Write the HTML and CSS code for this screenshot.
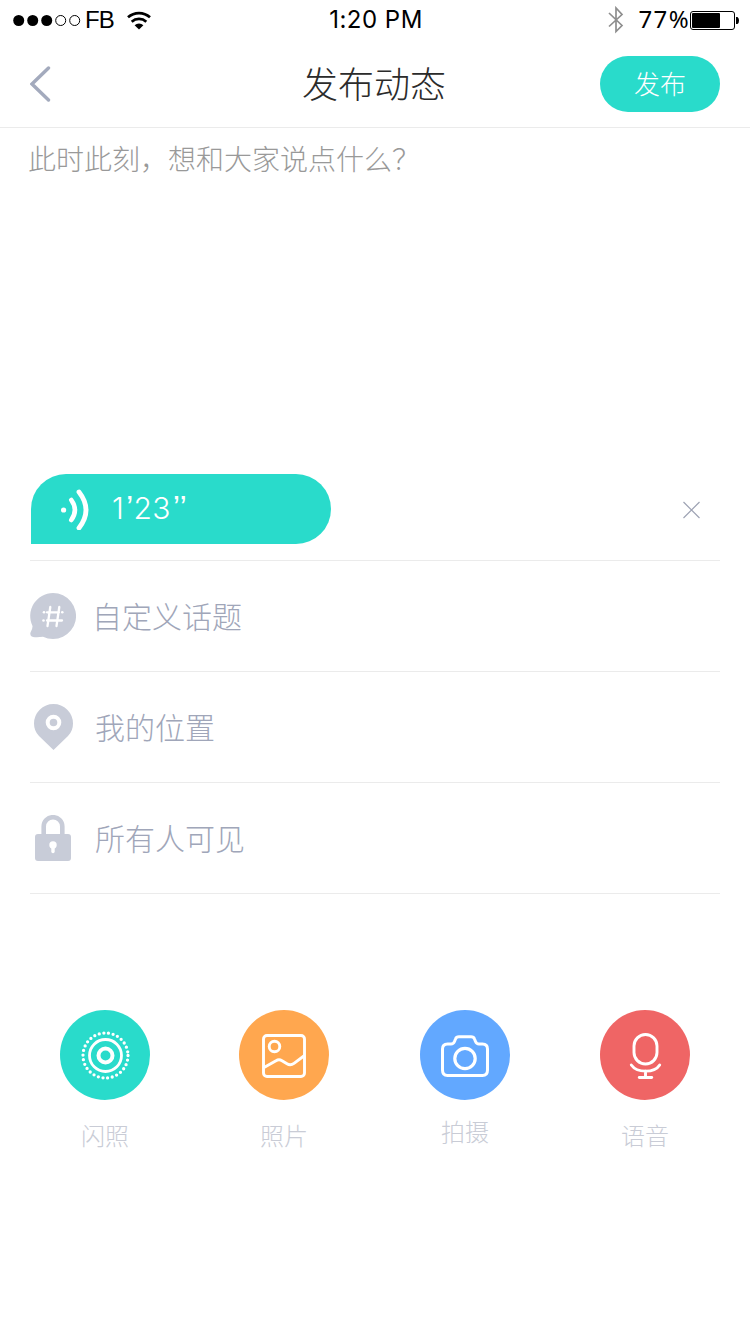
FILE: index.html
```html
<!DOCTYPE html>
<html lang="zh-CN">
<head>
  <meta charset="UTF-8" />
  <meta name="viewport" content="width=device-width, initial-scale=1.0"/>
  <title>发布动态</title>
  <link rel="stylesheet" href="styles.css">
</head>

<body>
  <!-- Phone status bar -->
  <div class="status-bar">
    <div class="status-left">
      <svg class="signal" width="68" height="12" viewBox="0 0 68 12">
        <circle cx="5.7" cy="6.5" r="5.5"/>
        <circle cx="19.7" cy="6.5" r="5.5"/>
        <circle cx="33.7" cy="6.5" r="5.5"/>
        <circle cx="47.7" cy="6.5" r="5" fill="none" stroke="#000"/>
        <circle cx="61.7" cy="6.5" r="5" fill="none" stroke="#000"/>
      </svg>
      <span class="carrier">FB</span>
      <svg class="wifi" width="24" height="19" viewBox="0 0 24 19">
        <path d="M1 6.3a16.5 16.5 0 0 1 22 0M4.7 10.7a11 11 0 0 1 14.6 0" fill="none" stroke="#000" stroke-width="2.7"/>
        <path d="M12 18.6L7.6 14.2a6.4 6.4 0 0 1 8.8 0z"/>
      </svg>
    </div>
    <span class="time">1:20 PM</span>
    <div class="status-right">
      <svg class="bluetooth" width="16" height="28" viewBox="0 0 16 28">
        <path d="M1 7L14 19.5L8 25.5V2L14 8.5L1 20.5" fill="none" stroke="#8e8e8e" stroke-width="1.7"/>
      </svg>
      <span class="percent">77%</span>
      <svg class="battery" width="49" height="19" viewBox="0 0 49 19">
        <rect x="0.5" y="0.5" width="44" height="18" rx="2.5" fill="none" stroke="#000"/>
        <rect x="2" y="2" width="28" height="15" rx="1"/>
        <path d="M46 6h1.5q1.5 1 1.5 3.5t-1.5 3.5H46z"/>
      </svg>
    </div>
  </div>

  <header class="nav">
    <a class="back" href="#">
      <svg width="22" height="36" viewBox="0 0 22 36">
        <path d="M18.5 2L2 18L18.5 34" fill="none" stroke="#a3aabd" stroke-width="3.4" stroke-linecap="round"/>
      </svg>
    </a>
    <h1 class="title">发布动态</h1>
    <button class="publish">发布</button>
  </header>

  <section class="editor">
    <p class="placeholder">此时此刻，想和大家说点什么？</p>
  </section>

  <section class="options">
    <!-- Recorded voice clip -->
    <div class="voice-row">
      <div class="voice">
        <svg width="30" height="42" viewBox="0 0 30 42" fill="none" stroke="#fff" stroke-linecap="round">
          <circle cx="2.6" cy="22" r="2.6" fill="#fff" stroke="none"/>
          <path d="M10.3 12Q17.5 22 10.3 32" stroke-width="4.6"/>
          <path d="M18 4Q32 22 18 40" stroke-width="4.8"/>
        </svg>
        <span class="duration">1<span class="mark">’</span>23<span class="mark">’’</span></span>
      </div>
      <svg class="remove" width="18" height="18" viewBox="0 0 18 18">
        <path d="M0.5 1L16.5 17M16.5 1L0.5 17" stroke="#9ea3b4" stroke-width="1.2"/>
      </svg>
    </div>

    <div class="option option-topic">
      <svg width="46" height="46" viewBox="0 0 46 46">
        <path d="M23 0A23 23 0 1 1 13 43.7Q8 44.5 3 44Q-.5 43 .5 39.5Q2.7 36 2.5 33A23 23 0 0 1 23 0z" fill="#c8ccd8"/>
        <path d="M20.3 14L17.5 33M29.3 14L26.5 33M17 19.3H29M17 27.5H32" fill="none" stroke="#fff" stroke-width="2.3" stroke-linecap="round"/>
        <g fill="#fff">
          <circle cx="14" cy="19.3" r="1.3"/>
          <circle cx="32.3" cy="19.3" r="1.3"/>
          <circle cx="13.5" cy="27.5" r="1.3"/>
        </g>
      </svg>
      <span>自定义话题</span>
    </div>

    <div class="option">
      <svg width="46" height="46" viewBox="0 0 46 46">
        <path d="M23.5 46L9 32Q4 27 4 19.5A19.5 19.5 0 0 1 43 19.5Q43 27 38 32z" fill="#c8ccd8"/>
        <circle cx="23.5" cy="18.5" r="5.8" fill="none" stroke="#fff" stroke-width="4"/>
      </svg>
      <span>我的位置</span>
    </div>

    <div class="option">
      <svg width="46" height="46" viewBox="0 0 46 46">
        <path d="M13.7 21V11.5a9.3 9.3 0 0 1 18.6 0V21" fill="none" stroke="#c8ccd8" stroke-width="4.6"/>
        <rect x="5" y="19" width="36" height="27" rx="3" fill="#c8ccd8"/>
        <circle cx="23" cy="30" r="3.7" fill="#fff"/>
        <path d="M23 31V36.5" stroke="#fff" stroke-width="3.4" stroke-linecap="round"/>
      </svg>
      <span>所有人可见</span>
    </div>
  </section>

  <footer class="actions">
    <div class="action">
      <div class="circle flash">
        <svg width="50" height="50" viewBox="0 0 50 50" fill="none" stroke="#fff">
          <circle cx="25.5" cy="25.5" r="22.5" stroke-width="3.3" stroke-linecap="round" stroke-dasharray="0 4.712"/>
          <circle cx="25.5" cy="25.5" r="16" stroke-width="2.8"/>
          <circle cx="25.5" cy="25.5" r="7" stroke-width="4"/>
        </svg>
      </div>
      <span>闪照</span>
    </div>
    <div class="action action-photo">
      <div class="circle photo">
        <svg width="50" height="50" viewBox="0 0 50 50" fill="none" stroke="#fff" stroke-width="2.9">
          <rect x="4.5" y="5.5" width="41" height="41" rx="3.5"/>
          <circle cx="15.5" cy="16.5" r="5.3"/>
          <path d="M5 37.5L17 30.7Q20 28.8 23 30.7L28 33.8Q31.5 36 35 33.3L45.5 25.5"/>
        </svg>
      </div>
      <span>照片</span>
    </div>
    <div class="action action-camera">
      <div class="circle camera">
        <svg width="50" height="50" viewBox="0 0 50 50" fill="none" stroke="#fff" stroke-width="3" stroke-linejoin="round">
          <path d="M7.5 14H11Q13.5 14 14.5 11.5L15.5 9Q16.3 6.700 19 6.700H31Q33.7 6.700 34.5 9L35.5 11.5Q36.5 14 39 14H42.5Q47.5 14 47.5 19V40Q47.5 45.5 42.5 45.5H7.5Q2.5 45.5 2.5 40V19Q2.5 14 7.5 14z"/>
          <circle cx="25" cy="28.5" r="10.2" stroke-width="3.2"/>
        </svg>
      </div>
      <span>拍摄</span>
    </div>
    <div class="action">
      <div class="circle mic">
        <svg width="50" height="50" viewBox="0 0 50 50" fill="none" stroke="#fff" stroke-width="2.9" stroke-linecap="round">
          <rect x="14" y="4.5" width="23" height="29.5" rx="11.5"/>
          <path d="M11.3 35C17 43.2 34.5 43.2 39.7 35M25.5 41V47"/>
          <path d="M19.3 47.5H31.7"/>
        </svg>
      </div>
      <span>语音</span>
    </div>
  </footer>
</body>
</html>
```
FILE: styles.css
```css
* {
  margin: 0;
  padding: 0;
  box-sizing: border-box;
}
body {
  width: 750px;
  height: 1334px;
  font-family: "Noto Sans CJK SC", sans-serif;
  font-weight: 300;
  background: #fff;
  overflow: hidden;
}
svg {
  display: block;
  flex-shrink: 0;
}

/* Status bar */
.status-bar {
  display: grid;
  grid-template-columns: 1fr auto 1fr;
  align-items: center;
  height: 40px;
  padding: 0 11px 0 13px;
  font-family: Inter, sans-serif;
  font-weight: 400;
  font-size: 24px;
  line-height: 40px;
  color: #000;
}
.status-left,
.status-right {
  display: flex;
  align-items: center;
}
.status-right {
  justify-content: flex-end;
}
.carrier {
  margin-left: 4px;
  font-family: "Liberation Sans", Arial, sans-serif;
  letter-spacing: -1px;
}
.wifi {
  margin-left: 13px;
}
.time {
  letter-spacing: 0.5px;
}
.bluetooth {
  margin-right: 14px;
}
.percent {
  padding-bottom: 2px;
  font-family: "Noto Sans", sans-serif;
  line-height: 38px;
  letter-spacing: 1.4px;
}

/* Navigation */
.nav {
  display: grid;
  grid-template-columns: 120px 1fr 120px;
  align-items: center;
  height: 88px;
  padding: 0 30px;
  border-bottom: 1px solid #ebebeb;
}
.title {
  padding: 0 2px 3px 0;
  font-size: 36px;
  font-weight: 300;
  line-height: 52px;
  text-align: center;
  color: #2b2b2b;
}
.publish {
  height: 56px;
  padding-bottom: 2px;
  border: 0;
  border-radius: 28px;
  background: #29dbcb;
  color: #fff;
  font: inherit;
  font-size: 26px;
}

/* Post text */
.editor {
  height: 346px;
  padding: 10px 28px;
}
.placeholder {
  font-size: 28px;
  line-height: 40px;
  color: #999;
}

/* Voice clip and options */
.options {
  padding: 0 30px;
}
.voice-row {
  display: flex;
  justify-content: space-between;
  height: 87px;
  padding: 0 19px 0 1px;
  border-bottom: 1px solid #ebebeb;
}
.voice {
  display: flex;
  align-items: center;
  width: 300px;
  height: 70px;
  padding-left: 30px;
  border-radius: 35px 35px 35px 0;
  background: #29dbcb;
}
.duration {
  margin-left: 21px;
  padding-bottom: 2px;
  font-family: Inter, sans-serif;
  font-size: 30px;
  letter-spacing: 0.3px;
  color: #fff;
}
.mark {
  margin-left: 2px;
  font-family: "Liberation Sans", Arial, sans-serif;
  font-size: 33px;
  line-height: 30px;
  letter-spacing: 0;
}
.remove {
  margin-top: 27px;
}
.option {
  display: flex;
  align-items: center;
  gap: 19px;
  height: 111px;
  border-bottom: 1px solid #ebebeb;
  font-size: 30px;
  color: #a0a6b9;
}
.option span {
  padding-bottom: 3px;
}
.option-topic {
  gap: 16px;
}

/* Attachment buttons */
.actions {
  display: flex;
  justify-content: space-between;
  padding: 116px 60px 0;
}
.action {
  display: flex;
  flex-direction: column;
  align-items: center;
  gap: 17px;
  font-size: 24px;
  line-height: 36px;
  color: #c9ccd6;
}
.action-photo {
  margin: 0 1px 0 -1px;
}
.action-camera {
  gap: 13px;
}
.circle {
  display: flex;
  align-items: center;
  justify-content: center;
  width: 90px;
  height: 90px;
  border-radius: 50%;
}
.flash {
  background: #29dbcb;
}
.photo {
  background: #ffa74f;
}
.camera {
  background: #62a8ff;
}
.mic {
  background: #ef6565;
}
```
